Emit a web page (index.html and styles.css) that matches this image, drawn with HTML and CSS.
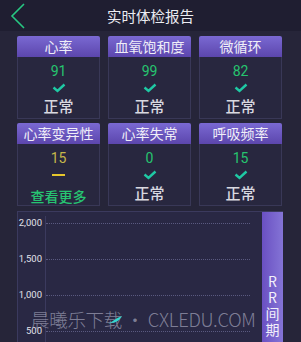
FILE: index.html
```html
<!DOCTYPE html>
<html lang="zh">
<head>
<meta charset="utf-8">
<link rel="stylesheet" href="styles.css">
</head>
<body>
<div class="page">
  <header class="topbar">
    <svg class="back" width="16" height="28" viewBox="0 0 16 28"><polyline points="14,2 2,14 14,26" fill="none" stroke="#27c782" stroke-width="1.6"/></svg>
    <div class="title">实时体检报告</div>
    <div></div>
  </header>
  <main class="content">
    <section class="cards">
      <div class="card"><div class="card-head">心率</div><div class="card-body"><div class="val green">91</div><svg class="check" width="14" height="10" viewBox="0 0 14 10"><polyline points="1.5,4.5 5.5,8 12.5,1.5" fill="none" stroke="#1fc9a4" stroke-width="2.4"/></svg><div class="status">正常</div></div></div>
      <div class="card"><div class="card-head">血氧饱和度</div><div class="card-body"><div class="val green">99</div><svg class="check" width="14" height="10" viewBox="0 0 14 10"><polyline points="1.5,4.5 5.5,8 12.5,1.5" fill="none" stroke="#1fc9a4" stroke-width="2.4"/></svg><div class="status">正常</div></div></div>
      <div class="card"><div class="card-head">微循环</div><div class="card-body"><div class="val green">82</div><svg class="check" width="14" height="10" viewBox="0 0 14 10"><polyline points="1.5,4.5 5.5,8 12.5,1.5" fill="none" stroke="#1fc9a4" stroke-width="2.4"/></svg><div class="status">正常</div></div></div>
      <div class="card"><div class="card-head">心率变异性</div><div class="card-body"><div class="val yellow">15</div><div class="dash"></div><div class="status more">查看更多</div></div></div>
      <div class="card"><div class="card-head">心率失常</div><div class="card-body"><div class="val green">0</div><svg class="check" width="14" height="10" viewBox="0 0 14 10"><polyline points="1.5,4.5 5.5,8 12.5,1.5" fill="none" stroke="#1fc9a4" stroke-width="2.4"/></svg><div class="status">正常</div></div></div>
      <div class="card"><div class="card-head">呼吸频率</div><div class="card-body"><div class="val green">15</div><svg class="check" width="14" height="10" viewBox="0 0 14 10"><polyline points="1.5,4.5 5.5,8 12.5,1.5" fill="none" stroke="#1fc9a4" stroke-width="2.4"/></svg><div class="status">正常</div></div></div>
    </section>
    <section class="chart">
      <div class="plot">
        <div class="row"><span class="ylabel">2,000</span><span class="grid"></span></div>
        <div class="row"><span class="ylabel">1,500</span><span class="grid"></span></div>
        <div class="row"><span class="ylabel">1,000</span><span class="grid"></span></div>
        <div class="row"><span class="ylabel">500</span><span class="grid"></span></div>
      </div>
      <div class="side"><span>R</span><span>R</span><span>间</span><span>期</span></div>
    </section>
  </main>
  <div class="watermark">晨曦乐下载<svg class="feather" width="16" height="10" viewBox="0 0 16 10"><path d="M1 9 C5 7 9 3 15 1 C13 5 9 8 4 8 Z" fill="#34d6d0"/></svg> • CXLEDU.COM</div>
</div>
</body>
</html>
```
FILE: styles.css
```css
* { box-sizing: border-box; }
html, body { margin: 0; padding: 0; }
body {
  background: #262539;
  font-family: "Noto Sans CJK SC", "Noto Sans", sans-serif;
  width: 301px;
  height: 342px;
  overflow: hidden;
}
.page { position: relative; width: 301px; height: 342px; overflow: hidden; }
.topbar {
  height: 31px;
  background: #1f1e31;
  display: grid;
  grid-template-columns: 40px 1fr 40px;
  align-items: center;
}
.back { margin-left: 10px; margin-top: 0; }
.title {
  text-align: center;
  color: #ececf2;
  font-size: 14.5px;
  line-height: 31px;
}
.content { padding: 5px 18px 0 17px; }
.cards {
  display: grid;
  grid-template-columns: repeat(3, 83px);
  column-gap: 8px;
  row-gap: 4px;
}
.card { height: 83px; display: flex; flex-direction: column; }
.card-head {
  height: 21px;
  background: linear-gradient(180deg, #7a69d2 0%, #5c46ad 100%);
  color: #f0eef8;
  font-size: 14px;
  line-height: 21px;
  text-align: center;
  border-radius: 2px 2px 0 0;
}
.card-body {
  flex: 1;
  background: #28273f;
  border: 1px solid #393857;
  border-top: none;
  display: flex;
  flex-direction: column;
  align-items: center;
}
.val {
  font-family: Roboto, "Noto Sans", sans-serif;
  font-size: 14px;
  line-height: 16px;
  margin-top: 6px;
}
.green { color: #26c46f; }
.yellow { color: #c5b64a; }
.check { margin-top: 4px; }
.dash { width: 13px; height: 2px; background: #e6c62c; margin-top: 8px; }
.status {
  color: #d9d9e0;
  font-size: 15px;
  line-height: 18px;
  margin-top: 4px;
  font-weight: 500;
}
.card:nth-child(4) .status { margin-top: 11px; }
.more { color: #27c472; font-size: 14px; }
.chart {
  margin-top: 5px;
  height: 140px;
  display: flex;
  background: #292844;
  border: 1px solid #3b3a5e;
  border-right: none;
}
.plot { flex: 1; padding-top: 4px; }
.row {
  height: 36px;
  display: flex;
  align-items: flex-start;
}
.ylabel {
  width: 28px;
  text-align: right;
  padding-right: 3px;
  color: #e2e2ea;
  font-family: Roboto, "Noto Sans", sans-serif;
  font-size: 9.5px;
  line-height: 14px;
  border-right: 1px solid #3b3a5e;
  height: 36px;
}
.grid {
  flex: 1;
  margin-top: 7px;
  margin-right: 12px;
  border-top: 1px dotted #5a5a80;
}
.side {
  width: 21px;
  background: linear-gradient(90deg, #6a50c2 0%, #8474d6 100%);
  display: flex;
  flex-direction: column;
  align-items: center;
  padding-top: 61px;
  color: #f2f0fa;
  font-size: 14px;
  line-height: 16px;
}
.watermark {
  position: absolute;
  left: 31px;
  top: 306px;
  color: rgba(200, 200, 222, 0.55);
  font-size: 18.5px;
  font-weight: 300;
  white-space: nowrap;
  letter-spacing: -0.3px;
}
.feather { position: absolute; left: 76px; top: 9px; }
```
